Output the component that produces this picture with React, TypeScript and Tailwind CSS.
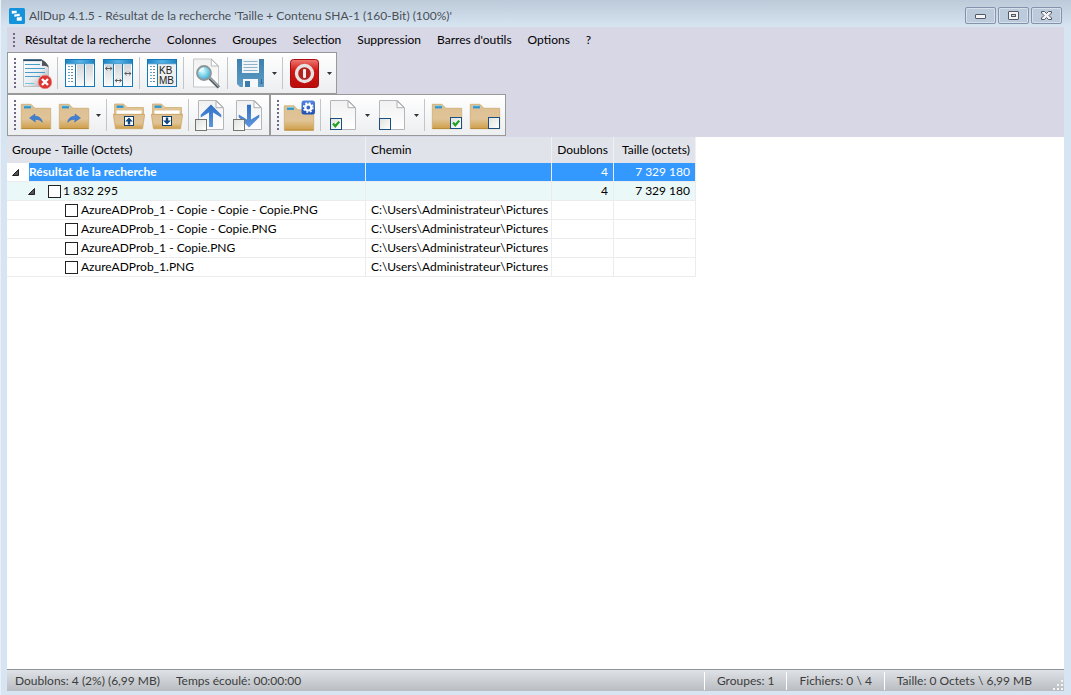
import { Fragment, ReactNode } from "react";

function Defs() {
  return (
    <svg width="0" height="0" className="absolute" aria-hidden="true">
      <defs>
        <linearGradient id="folder" x1="0" y1="0" x2="0" y2="1">
          <stop offset="0" stopColor="#dcbf92" />
          <stop offset="0.6" stopColor="#e0c397" />
          <stop offset="1" stopColor="#cf9f48" />
        </linearGradient>
        <linearGradient id="paper" x1="0" y1="0" x2="0" y2="1">
          <stop offset="0" stopColor="#f1f1f1" />
          <stop offset="1" stopColor="#ffffff" />
        </linearGradient>
        <linearGradient id="doc" x1="0" y1="0" x2="1" y2="1">
          <stop offset="0" stopColor="#ffffff" />
          <stop offset="0.55" stopColor="#e9edf0" />
          <stop offset="1" stopColor="#9aa0a6" />
        </linearGradient>
        <linearGradient id="column" x1="0" y1="0" x2="0" y2="1">
          <stop offset="0" stopColor="#d3d6da" />
          <stop offset="1" stopColor="#fbfbfb" />
        </linearGradient>
        <linearGradient id="bluebar" x1="0" y1="0" x2="1" y2="0">
          <stop offset="0" stopColor="#1f86c4" />
          <stop offset="0.5" stopColor="#57b3e6" />
          <stop offset="1" stopColor="#1f86c4" />
        </linearGradient>
        <linearGradient id="arrow" x1="0" y1="0" x2="0" y2="1">
          <stop offset="0" stopColor="#2f6fc4" />
          <stop offset="1" stopColor="#5f97dc" />
        </linearGradient>
        <linearGradient id="red" x1="0" y1="0" x2="0" y2="1">
          <stop offset="0" stopColor="#ee7a72" />
          <stop offset="0.4" stopColor="#d01713" />
          <stop offset="1" stopColor="#b80d0c" />
        </linearGradient>
        <linearGradient id="floppy" x1="0" y1="0" x2="0" y2="1">
          <stop offset="0" stopColor="#3f7fae" />
          <stop offset="1" stopColor="#5f9cc6" />
        </linearGradient>
        <radialGradient id="lens" cx="0.4" cy="0.35" r="0.7">
          <stop offset="0" stopColor="#e2fbff" />
          <stop offset="0.5" stopColor="#7fd4ea" />
          <stop offset="1" stopColor="#3aa3c8" />
        </radialGradient>
        <linearGradient id="gearbox" x1="0" y1="0" x2="0" y2="1">
          <stop offset="0" stopColor="#5586de" />
          <stop offset="1" stopColor="#1f4fb0" />
        </linearGradient>
        <linearGradient id="box" x1="0" y1="0" x2="1" y2="1">
          <stop offset="0" stopColor="#dfe2dd" />
          <stop offset="1" stopColor="#ffffff" />
        </linearGradient>
      </defs>
    </svg>
  );
}

function Icon({ children }: { children: ReactNode }) {
  return (
    <svg width="32" height="32" viewBox="0 0 32 32" aria-hidden="true" className="block shrink-0">
      {children}
    </svg>
  );
}

function FolderShape({ y = 0 }: { y?: number }) {
  return (
    <g transform={`translate(0 ${y})`}>
      <path d="M1.3 5.3H11L15 9.3H30.7V29.7H1.3Z" fill="url(#folder)" stroke="#cda767" strokeWidth="0.7" />
      <path d="M1.5 29.5H30.5" stroke="#b98a3a" />
      <rect x="4" y="7" width="7" height="2.4" fill="#2f97cf" />
      <rect x="4" y="6.4" width="7" height="0.8" fill="#86d2ee" />
    </g>
  );
}

function OpenFolder({ down = false }: { down?: boolean }) {
  return (
    <Icon>
      <path d="M1.5 16V5H10.5L14 8.5H30.5V16Z" fill="#dfc498" stroke="#cda767" strokeWidth="0.7" />
      <rect x="3.5" y="6.5" width="7" height="2.4" fill="#2f97cf" />
      <path d="M3.5 15V11.5H28.5V15Z" fill="#fff" />
      <path d="M0.3 15.3H31.7L29.5 29.7H2.5Z" fill="url(#folder)" stroke="#c99f58" strokeWidth="0.7" />
      <rect x="11.5" y="17.5" width="9" height="9" fill="#fff" stroke="#123d6b" />
      {down ? (
        <path d="M14.8 18.6H17.2V21.6H19.8L16 25.6L12.2 21.6H14.8Z" fill="#14477c" />
      ) : (
        <path d="M14.8 25.4H17.2V22.4H19.8L16 18.4L12.2 22.4H14.8Z" fill="#14477c" />
      )}
    </Icon>
  );
}

function UndoFolder({ flip = false }: { flip?: boolean }) {
  return (
    <Icon>
      <FolderShape />
      <g transform={flip ? "translate(32 0) scale(-1 1)" : undefined}>
        <path
          d="M9.5 19L15 15L14.7 17.3C19 17 22 19.8 22.3 23.3C20 20.9 18 20.3 14.8 20.6L15.5 23Z"
          fill="#3f80d6"
          stroke="#2c66b4"
          strokeWidth="0.5"
        />
      </g>
    </Icon>
  );
}

function Page() {
  return (
    <g>
      <path
        d="M4 1.5H21.5L28.5 8.5V30.5H4Q3.5 30.5 3.5 30V2Q3.5 1.5 4 1.5Z"
        fill="url(#paper)"
        stroke="#b4b6b9"
      />
      <path d="M21 2V8.7H28Z" fill="#fbfbfb" stroke="#a6a8ab" strokeWidth="0.9" />
    </g>
  );
}

function MovePage({ down = false }: { down?: boolean }) {
  return (
    <Icon>
      <Page />
      <path
        d={
          down
            ? "M16 28.5L26.3 18.3V15.5L18 20.5V5.7H14V20.5L5.7 15.5V18.3Z"
            : "M16 5.5L26.3 15.7V18.5L18 13.5V28H14V13.5L5.7 18.5V15.7Z"
        }
        fill="url(#arrow)"
      />
      <rect x="0.5" y="20.5" width="11" height="11" fill="url(#box)" stroke="#73766f" />
    </Icon>
  );
}

function Tick({ x, y, checked = false }: { x: number; y: number; checked?: boolean }) {
  return (
    <g transform={`translate(${x} ${y})`}>
      <rect x="0.5" y="0.5" width="11" height="11" fill="url(#box)" stroke="#1b4f80" />
      {checked && <path d="M3 5.5L5.3 8.2L9.2 3.6" fill="none" stroke="#22a022" strokeWidth="2.2" />}
    </g>
  );
}

function MarkedPage({ checked = false }: { checked?: boolean }) {
  return (
    <Icon>
      <Page />
      <Tick x={3} y={19} checked={checked} />
    </Icon>
  );
}

function MarkedFolder({ checked = false }: { checked?: boolean }) {
  return (
    <Icon>
      <FolderShape />
      <Tick x={19} y={18} checked={checked} />
    </Icon>
  );
}

function Grid({ children }: { children?: ReactNode }) {
  return (
    <Icon>
      <rect x="1.5" y="2.5" width="29" height="27" fill="#fff" stroke="#1377b8" />
      <rect x="2" y="3" width="28" height="3.5" fill="url(#bluebar)" />
      <path d="M2 6.8H30" stroke="#1377b8" strokeWidth="0.8" />
      {children}
    </Icon>
  );
}

function Lines() {
  return (
    <g strokeWidth="1">
      <path d="M4 9.5H6M4 12.5H6M4 15.5H6M4 18.5H6M4 21.5H6M4 24.5H6" stroke="#5fa8d0" />
      <path d="M7 9.5H9M7 12.5H9M7 15.5H9M7 18.5H9M7 21.5H9M7 24.5H9" stroke="#7d8287" />
    </g>
  );
}

function ColumnsIcon() {
  return (
    <Grid>
      <rect x="13" y="8" width="7" height="21" fill="url(#column)" />
      <rect x="22" y="8" width="7" height="21" fill="url(#column)" />
      <path d="M11.5 7V29M20.5 7V29" stroke="#1377b8" />
      <Lines />
    </Grid>
  );
}

function WidthsIcon() {
  return (
    <Grid>
      <rect x="3" y="8" width="8" height="21" fill="url(#column)" />
      <rect x="13" y="8" width="7" height="21" fill="url(#column)" />
      <rect x="22" y="8" width="7" height="21" fill="url(#column)" />
      <path d="M11.5 7V29M20.5 7V29" stroke="#1377b8" />
      <g fill="none" stroke="#4c4c4c" strokeWidth="0.9">
        <path d="M3.5 11.5H10M5.3 9.8L3.6 11.5L5.3 13.2M8.2 9.8L9.9 11.5L8.2 13.2" />
        <path d="M13 23.5H19.5M15 21.8L13.3 23.5L15 25.2M17.6 21.8L19.3 23.5L17.6 25.2" />
        <path d="M22.7 16.5H29M24.6 14.8L22.9 16.5L24.6 18.2M27.2 14.8L28.9 16.5L27.2 18.2" />
      </g>
    </Grid>
  );
}

function UnitsIcon() {
  return (
    <Grid>
      <rect x="12" y="8" width="18" height="21" fill="#eeeff0" />
      <path d="M11.5 7V29" stroke="#1377b8" />
      <Lines />
      <text x="13" y="16.5" fontSize="10" fontFamily="Liberation Sans, sans-serif" fill="#222">KB</text>
      <text x="13" y="26.5" fontSize="10" fontFamily="Liberation Sans, sans-serif" fill="#222">MB</text>
    </Grid>
  );
}

function ListDeleteIcon() {
  return (
    <Icon>
      <path d="M3.5 2.5H22L28.5 9V29.5H3.5Z" fill="url(#doc)" stroke="#b0b6ba" strokeWidth="0.8" />
      <path d="M3.3 3.2H21.5" stroke="#24506e" strokeWidth="1.8" />
      <path d="M21 2.2Q23 5 22 9Q26 8 28.7 10.5Q27 4.5 21 2.2Z" fill="#4b5258" />
      <path d="M5 7.5H20M5 11.5H25M5 15.5H25M5 19.5H20" stroke="#4a9cc8" strokeWidth="1.2" />
      <path d="M5 26.5H14" stroke="#79c3e2" />
      <circle cx="25" cy="25" r="6.8" fill="#dd3531" stroke="#ef8a86" strokeWidth="0.6" />
      <path d="M22 22L28 28M28 22L22 28" stroke="#fff" strokeWidth="2.4" />
    </Icon>
  );
}

function SearchIcon() {
  return (
    <Icon>
      <path d="M3.5 2H21.5L28.5 9V30H3.5Z" fill="url(#paper)" stroke="#bfc1c3" strokeWidth="0.9" />
      <path d="M21.3 2.2V9H28.2Z" fill="#fff" stroke="#a5a8aa" strokeWidth="0.8" />
      <path d="M19.5 21L28.8 30.3" stroke="#536067" strokeWidth="3.2" />
      <path d="M19.8 20.5L28.6 29.3" stroke="#aab5b9" strokeWidth="1.2" />
      <circle cx="14" cy="16" r="7" fill="url(#lens)" stroke="#8e9699" strokeWidth="1.8" />
      <path d="M9.7 15Q10.5 11.5 14 11.3" fill="none" stroke="#fff" strokeWidth="1.3" />
    </Icon>
  );
}

function SaveIcon() {
  return (
    <Icon>
      <path d="M3 2H30V30H6L3 27Z" fill="url(#floppy)" />
      <rect x="8" y="2" width="17" height="14" fill="#f1f5f8" />
      <path d="M9.5 4.5H23.5M9.5 7.5H23.5M9.5 10.5H23.5M9.5 13.5H23.5" stroke="#8fb2cb" />
      <path d="M9 30V22H24V30Z" fill="#f5f8fa" />
      <rect x="11" y="24" width="5" height="6" fill="#3b7cab" />
      <path d="M27.5 22V27M26 25.5L27.5 27L29 25.5" fill="none" stroke="#2d6994" strokeWidth="0.9" />
    </Icon>
  );
}

function PowerIcon() {
  return (
    <Icon>
      <rect x="1.5" y="2.5" width="28" height="28" rx="3" fill="url(#red)" stroke="#a90f0e" />
      <circle cx="15.5" cy="16.5" r="8" fill="#b3201d" stroke="#e6e2e2" strokeWidth="3.4" />
      <rect x="14" y="12" width="3" height="9" rx="1" fill="#f3eeee" />
    </Icon>
  );
}

function GearFolder() {
  return (
    <Icon>
      <FolderShape y={1.5} />
      <rect x="18.5" y="1.5" width="13.5" height="14" rx="2.5" fill="url(#gearbox)" />
      <circle cx="25.3" cy="8.5" r="3" fill="none" stroke="#fff" strokeWidth="2.2" />
      <circle cx="25.3" cy="8.5" r="4.6" fill="none" stroke="#fff" strokeWidth="1.6" strokeDasharray="1.8 1.81" />
    </Icon>
  );
}

type Item = { label: string; icon: ReactNode; menu?: boolean } | null;

const mainBar: Item[] = [
  { label: "Effacer la liste", icon: <ListDeleteIcon /> },
  null,
  { label: "Colonnes", icon: <ColumnsIcon /> },
  { label: "Largeur des colonnes", icon: <WidthsIcon /> },
  null,
  { label: "Unités", icon: <UnitsIcon /> },
  null,
  { label: "Rechercher", icon: <SearchIcon /> },
  null,
  { label: "Enregistrer", icon: <SaveIcon />, menu: true },
  null,
  { label: "Quitter", icon: <PowerIcon />, menu: true },
];

const groupBar: Item[] = [
  { label: "Dossier précédent", icon: <UndoFolder /> },
  { label: "Dossier suivant", icon: <UndoFolder flip />, menu: true },
  null,
  { label: "Réduire", icon: <OpenFolder /> },
  { label: "Développer", icon: <OpenFolder down /> },
  null,
  { label: "Sélection précédente", icon: <MovePage /> },
  { label: "Sélection suivante", icon: <MovePage down /> },
];

const selectionBar: Item[] = [
  { label: "Options de sélection", icon: <GearFolder /> },
  null,
  { label: "Cocher les fichiers", icon: <MarkedPage checked />, menu: true },
  { label: "Décocher les fichiers", icon: <MarkedPage />, menu: true },
  null,
  { label: "Cocher le dossier", icon: <MarkedFolder checked /> },
  { label: "Décocher le dossier", icon: <MarkedFolder /> },
];

function Grip({ small = false }: { small?: boolean }) {
  return (
    <span className="flex w-[9px] shrink-0 flex-col items-center justify-center gap-[2px] pl-1">
      {Array.from({ length: small ? 4 : 8 }, (_, i) => (
        <i key={i} className="block size-[2px] bg-[#6f6888]" />
      ))}
    </span>
  );
}

function Toolbar({ label, items }: { label: string; items: Item[] }) {
  return (
    <div
      role="toolbar"
      aria-label={label}
      className="flex h-[42px] border border-[#999] bg-linear-to-b from-white to-[#eceef0] pr-px"
    >
      <Grip />
      {items.map((item, i) =>
        item ? (
          <Fragment key={i}>
            <button type="button" aria-label={item.label} className="flex w-[38px] items-center justify-center">
              {item.icon}
            </button>
            {item.menu && (
              <button type="button" aria-label={`${item.label} : menu`} className="flex w-[11px] items-center justify-center">
                <svg width="5" height="3" viewBox="0 0 5 3">
                  <path d="M0 0H5L2.5 3Z" fill="#333" />
                </svg>
              </button>
            )}
          </Fragment>
        ) : (
          <span key={i} className="my-1 ml-[2px] mr-[3px] w-px bg-[#c3c5c9]" />
        ),
      )}
    </div>
  );
}

const menus = [
  "Résultat de la recherche",
  "Colonnes",
  "Groupes",
  "Selection",
  "Suppression",
  "Barres d'outils",
  "Options",
  "?",
];

const files = [
  "AzureADProb_1 - Copie - Copie - Copie.PNG",
  "AzureADProb_1 - Copie - Copie.PNG",
  "AzureADProb_1 - Copie.PNG",
  "AzureADProb_1.PNG",
];

function WindowButton({ label, children }: { label: string; children: ReactNode }) {
  return (
    <button
      type="button"
      aria-label={label}
      className="flex h-[17px] w-[31px] items-center justify-center rounded-[2px] border border-[#8492ad] bg-[#bccbdc] inset-ring inset-ring-[#d5e0ea]"
    >
      <svg width="13" height="11" viewBox="0 0 13 11" fill="#f4f4f4" stroke="#535766">
        {children}
      </svg>
    </button>
  );
}

function Expander() {
  return (
    <button type="button" aria-label="Réduire" className="flex size-2 items-center justify-center">
      <svg width="7" height="7" viewBox="0 0 7 7">
        <path d="M6.5 0.5V6.5H0.5Z" fill="#555" stroke="#222" />
      </svg>
    </button>
  );
}

function RowCheck({ id }: { id: string }) {
  return <input id={id} type="checkbox" className="size-[13px] shrink-0 appearance-none border border-[#222] bg-white" />;
}

const cell = "h-[19px] overflow-hidden border-r border-b border-[#ececee] p-0 whitespace-nowrap";
const head = "h-[26px] border-r border-[#f1f1f4] bg-[#e1e3ea] p-0 font-normal whitespace-nowrap";

function ResultTable() {
  return (
    <table className="w-[689px] table-fixed border-separate border-spacing-0 text-left">
      <colgroup>
        <col className="w-[359px]" />
        <col className="w-[186px]" />
        <col className="w-[62px]" />
        <col className="w-[82px]" />
      </colgroup>
      <thead>
        <tr>
          <th className={`${head} pl-[5px]`}>Groupe - Taille (Octets)</th>
          <th className={`${head} pl-[5px]`}>Chemin</th>
          <th className={`${head} pr-[5px] text-right`}>Doublons</th>
          <th className={`${head} pr-[5px] text-right`}>Taille (octets)</th>
        </tr>
      </thead>
      <tbody>
        <tr className="text-white">
          <td className={cell}>
            <div className="flex h-[18px] items-center">
              <span className="flex w-[22px] pl-1">
                <Expander />
              </span>
              <span className="flex-1 bg-[#3399ff] font-bold">Résultat de la recherche</span>
            </div>
          </td>
          <td className={`${cell} bg-[#3399ff]`}></td>
          <td className={`${cell} bg-[#3399ff] pr-[5px] text-right`}>4</td>
          <td className={`${cell} bg-[#3399ff] pr-[5px] text-right`}>7 329 180</td>
        </tr>
        <tr className="bg-[#ebf8f8]">
          <td className={cell}>
            <div className="flex items-center pl-5">
              <Expander />
              <span className="ml-[13px] flex items-center gap-[2px]">
                <RowCheck id="group" />
                <label htmlFor="group">1 832 295</label>
              </span>
            </div>
          </td>
          <td className={cell}></td>
          <td className={`${cell} pr-[5px] text-right`}>4</td>
          <td className={`${cell} pr-[5px] text-right`}>7 329 180</td>
        </tr>
        {files.map((name, i) => (
          <tr key={name}>
            <td className={cell}>
              <div className="flex items-center gap-[3px] pl-[58px]">
                <RowCheck id={`file-${i}`} />
                <label htmlFor={`file-${i}`}>{name}</label>
              </div>
            </td>
            <td className={`${cell} pl-[5px]`}>C:\Users\Administrateur\Pictures</td>
            <td className={cell}></td>
            <td className={cell}></td>
          </tr>
        ))}
      </tbody>
    </table>
  );
}

export default function App() {
  return (
    <div className="flex min-h-screen flex-col border-l border-[#e9f0f7] bg-[#d7e4f1] pr-[7px] pb-1 pl-[6px] font-[Lato,sans-serif] text-[12px] leading-[18px] text-black">
      <Defs />
      <header className="-mr-[7px] -ml-[6px] flex h-[27px] items-center bg-linear-to-b from-[#bccad9] to-[#d7e4f1] pr-[9px] pl-2 text-[#4b5058]">
        <svg width="16" height="16" viewBox="0 0 16 16" className="mt-1 mr-1 shrink-0">
          <rect width="16" height="16" rx="1.5" fill="#1492dc" />
          <path d="M2.5 2.5H8V6H2.5ZM5 5.5H11V9H5ZM7.5 8.5H13V13H7.5Z" fill="#fff" stroke="#1492dc" strokeWidth="0.6" />
        </svg>
        <h1 className="mt-1 flex-1">AllDup 4.1.5 - Résultat de la recherche 'Taille + Contenu SHA-1 (160-Bit) (100%)'</h1>
        <div className="mt-1 flex gap-[2px]">
          <WindowButton label="Réduire">
            <rect x="1.5" y="4.5" width="10" height="4" rx="0.5" />
          </WindowButton>
          <WindowButton label="Agrandir">
            <rect x="1.5" y="1.5" width="10" height="8" rx="0.5" />
            <rect x="4.5" y="4.5" width="4" height="2" fill="#c9d5e2" />
          </WindowButton>
          <WindowButton label="Fermer">
            <path d="M1.5 1.5H4.5L6.5 3.5L8.5 1.5H11.5V3L9 5.5L11.5 8V9.5H8.5L6.5 7.5L4.5 9.5H1.5V8L4 5.5L1.5 3V1.5Z" />
          </WindowButton>
        </div>
      </header>

      <div className="bg-[#d8d7e5] pb-px">
        <nav className="flex h-[25px]">
          <Grip small />
          <div className="flex items-center gap-4 pl-[9px]">
            {menus.map((m) => (
              <button key={m} type="button">
                {m}
              </button>
            ))}
          </div>
        </nav>
        <div className="flex">
          <Toolbar label="Résultat" items={mainBar} />
        </div>
        <div className="flex">
          <Toolbar label="Groupes" items={groupBar} />
          <Toolbar label="Sélection" items={selectionBar} />
        </div>
      </div>

      <main className="flex-1 bg-white">
        <ResultTable />
      </main>

      <footer className="flex h-[22px] items-center border-t border-[#8f939d] bg-linear-to-b from-[#dfe2e6] to-[#b9bdc1] text-[#3c3c3c]">
        <span className="pl-2">Doublons: 4 (2%) (6,99 MB)</span>
        <span className="flex-1 pl-4">Temps écoulé: 00:00:00</span>
        <span className="border-l border-white px-3">Groupes: 1</span>
        <span className="border-l border-white px-3">Fichiers: 0 \ 4</span>
        <span className="border-l border-white pr-5 pl-3">Taille: 0 Octets \ 6,99 MB</span>
        <svg width="12" height="12" viewBox="0 0 12 12" className="self-end" fill="#f4f5f6">
          <path d="M9 1h2v2H9zM9 5h2v2H9zM5 5h2v2H5zM9 9h2v2H9zM5 9h2v2H5zM1 9h2v2H1z" />
        </svg>
      </footer>
    </div>
  );
}
